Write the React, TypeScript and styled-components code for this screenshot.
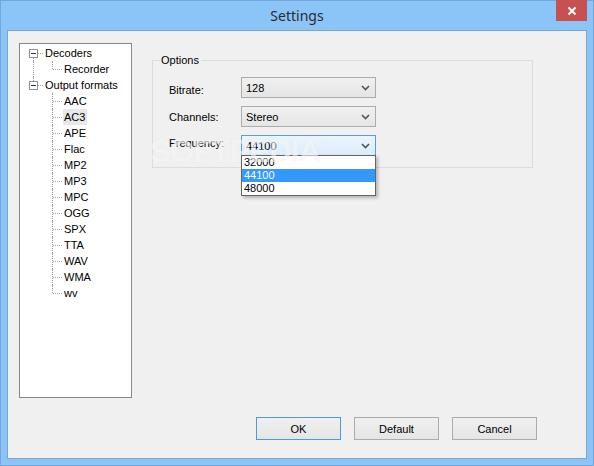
import React from "react";
import styled, { createGlobalStyle } from "styled-components";

const GlobalStyle = createGlobalStyle`
  html, body { margin: 0; padding: 0; background: #ffffff; }
  body { font-family: "Liberation Sans", Arial, sans-serif; font-size: 11px; color: #000; }
  * { box-sizing: border-box; }
`;

type Vert = "none" | "full" | "top" | "bottom";
type CellDef = { v: Vert; h: boolean; box?: boolean };

const blank: CellDef = { v: "none", h: false };
const pipe: CellDef = { v: "full", h: false };
const tee: CellDef = { v: "full", h: true };
const elbow: CellDef = { v: "top", h: true };

const TREE: { label: string; cells: CellDef[]; selected?: boolean }[] = [
  { label: "Decoders", cells: [{ v: "bottom", h: true, box: true }] },
  { label: "Recorder", cells: [pipe, elbow] },
  { label: "Output formats", cells: [{ v: "top", h: true, box: true }] },
  { label: "AAC", cells: [blank, tee] },
  { label: "AC3", cells: [blank, tee], selected: true },
  { label: "APE", cells: [blank, tee] },
  { label: "Flac", cells: [blank, tee] },
  { label: "MP2", cells: [blank, tee] },
  { label: "MP3", cells: [blank, tee] },
  { label: "MPC", cells: [blank, tee] },
  { label: "OGG", cells: [blank, tee] },
  { label: "SPX", cells: [blank, tee] },
  { label: "TTA", cells: [blank, tee] },
  { label: "WAV", cells: [blank, tee] },
  { label: "WMA", cells: [blank, tee] },
  { label: "wv", cells: [blank, elbow] },
];

const Window = styled.div`
  width: 594px;
  height: 466px;
  background: #8bc4f7;
  border: 1px solid #73a7dc;
  padding: 0 6px 6px 6px;
  display: flex;
  flex-direction: column;
`;

const TitleBar = styled.div`
  position: relative;
  height: 29px;
  flex: none;
  display: flex;
  align-items: center;
  justify-content: center;
  font-family: "Noto Sans", "Open Sans", sans-serif;
  font-size: 14px;
  color: #2b2b2b;
`;

const CloseButton = styled.div`
  position: absolute;
  top: -1px;
  right: 0;
  width: 31px;
  height: 21px;
  background: #c75050;
  display: flex;
  align-items: center;
  justify-content: center;
`;

const Client = styled.div`
  position: relative;
  flex: 1;
  background: #f0f0f0;
  border: 1px solid #7ea5ce;
  padding: 12px 0 0 11px;
  display: flex;
  flex-direction: column;
`;

const MainRow = styled.div`
  display: flex;
  gap: 20px;
  height: 355px;
`;

const TreeBox = styled.div`
  width: 113px;
  height: 355px;
  background: #ffffff;
  border: 1px solid #828790;
  padding: 1px 0 0 4px;
`;

const TreeRow = styled.div`
  display: flex;
  height: 16px;
  align-items: center;
`;

const Cell = styled.div<{ $v: Vert; $h: boolean }>`
  position: relative;
  width: 19px;
  height: 16px;
  flex: none;

  &::before {
    content: "";
    display: ${(p) => (p.$v === "none" ? "none" : "block")};
    position: absolute;
    left: 9px;
    top: ${(p) => (p.$v === "bottom" ? "8px" : "0")};
    height: ${(p) => (p.$v === "full" ? "16px" : "8px")};
    border-left: 1px dotted #a0a0a0;
  }

  &::after {
    content: "";
    display: ${(p) => (p.$h ? "block" : "none")};
    position: absolute;
    left: 10px;
    right: 0;
    top: 8px;
    border-top: 1px dotted #a0a0a0;
  }
`;

const Expander = styled.div`
  position: absolute;
  left: 5px;
  top: 4px;
  width: 9px;
  height: 9px;
  background: #ffffff;
  border: 1px solid #919191;
  z-index: 1;
  display: flex;
  align-items: center;
  justify-content: center;

  &::before {
    content: "";
    width: 5px;
    height: 1px;
    background: #2a3a66;
  }
`;

const TreeLabel = styled.span<{ $selected?: boolean }>`
  margin-left: 1px;
  padding: 0 2px 0 1px;
  height: 16px;
  line-height: 16px;
  font-size: 11px;
  white-space: nowrap;
  background: ${(p) => (p.$selected ? "#e8e8e8" : "transparent")};
`;

const GroupBox = styled.div`
  margin-top: 17px;
  width: 381px;
  height: 108px;
  border: 1px solid #dcdcdc;
  display: flex;
  flex-direction: column;
`;

const GroupCaption = styled.span`
  align-self: flex-start;
  margin: -7px 0 0 7px;
  padding: 0 2px 0 1px;
  background: #f0f0f0;
  font-size: 11px;
  line-height: 13px;
`;

const FieldGrid = styled.div`
  display: grid;
  grid-template-columns: 72px 135px;
  grid-auto-rows: 21px;
  row-gap: 8px;
  padding: 10px 0 0 16px;
`;

const FieldLabel = styled.span<{ $top: number }>`
  align-self: start;
  margin-top: ${(p) => p.$top}px;
  font-size: 11px;
  line-height: 13px;
`;

const Combo = styled.div<{ $focused?: boolean }>`
  position: relative;
  height: 21px;
  border: 1px solid ${(p) => (p.$focused ? "#569de5" : "#acacac")};
  background: ${(p) =>
    p.$focused
      ? "linear-gradient(#ecf4fc, #dcecfc)"
      : "linear-gradient(#f0f0f0, #e5e5e5)"};
  display: flex;
  align-items: center;
  justify-content: space-between;
  padding: 0 5px 0 4px;
  font-size: 11px;
`;

const DropList = styled.div`
  position: absolute;
  top: 100%;
  left: -1px;
  width: 135px;
  background: #ffffff;
  border: 1px solid #646464;
  box-shadow: 2px 2px 3px rgba(0, 0, 0, 0.25);
  z-index: 3;
`;

const DropItem = styled.div<{ $active?: boolean }>`
  height: 13px;
  line-height: 13px;
  padding-left: 2px;
  font-size: 11px;
  background: ${(p) => (p.$active ? "#3399ff" : "transparent")};
  color: ${(p) => (p.$active ? "#ffffff" : "#000000")};
`;

const Watermark = styled.div`
  position: absolute;
  left: 142px;
  top: 106px;
  font-family: "Liberation Sans", Arial, sans-serif;
  font-weight: bold;
  font-size: 31px;
  line-height: 30px;
  letter-spacing: -0.8px;
  color: rgba(255, 255, 255, 0.6);
  text-shadow: 0 0 1px rgba(0, 0, 0, 0.06);
  z-index: 4;
  pointer-events: none;

  sup {
    font-size: 10px;
    font-weight: normal;
    vertical-align: top;
    line-height: 10px;
  }
`;

const ButtonRow = styled.div`
  display: flex;
  justify-content: flex-end;
  gap: 13px;
  margin-top: 19px;
  padding-right: 49px;
`;

const Button = styled.div<{ $default?: boolean }>`
  width: 85px;
  height: 23px;
  border: 1px solid ${(p) => (p.$default ? "#4a9ae8" : "#acacac")};
  background: linear-gradient(#f0f0f0, #e5e5e5);
  display: flex;
  align-items: center;
  justify-content: center;
  font-size: 11px;
`;

const Chevron = () => (
  <svg width="9" height="6" viewBox="0 0 9 6">
    <path d="M1 1 L4.5 4.5 L8 1" fill="none" stroke="#555" strokeWidth="1.6" />
  </svg>
);

export default function App() {
  return (
    <>
      <GlobalStyle />
      <Window>
        <TitleBar>
          Settings
          <CloseButton>
            <svg width="10" height="10" viewBox="0 0 10 10">
              <path d="M1.5 1.5 L8.5 8.5 M8.5 1.5 L1.5 8.5" stroke="#fff" strokeWidth="2" />
            </svg>
          </CloseButton>
        </TitleBar>
        <Client>
          <MainRow>
            <TreeBox>
              {TREE.map((row) => (
                <TreeRow key={row.label}>
                  {row.cells.map((c, i) => (
                    <Cell key={i} $v={c.v} $h={c.h}>
                      {c.box && <Expander />}
                    </Cell>
                  ))}
                  <TreeLabel $selected={row.selected}>{row.label}</TreeLabel>
                </TreeRow>
              ))}
            </TreeBox>
            <GroupBox>
              <GroupCaption>Options</GroupCaption>
              <FieldGrid>
                <FieldLabel $top={7}>Bitrate:</FieldLabel>
                <Combo>
                  128
                  <Chevron />
                </Combo>
                <FieldLabel $top={5}>Channels:</FieldLabel>
                <Combo>
                  Stereo
                  <Chevron />
                </Combo>
                <FieldLabel $top={2}>Frequency:</FieldLabel>
                <Combo $focused>
                  44100
                  <Chevron />
                  <DropList>
                    <DropItem>32000</DropItem>
                    <DropItem $active>44100</DropItem>
                    <DropItem>48000</DropItem>
                  </DropList>
                </Combo>
              </FieldGrid>
            </GroupBox>
          </MainRow>
          <Watermark>
            SOFTPEDIA<sup>®</sup>
          </Watermark>
          <ButtonRow>
            <Button $default>OK</Button>
            <Button>Default</Button>
            <Button>Cancel</Button>
          </ButtonRow>
        </Client>
      </Window>
    </>
  );
}
